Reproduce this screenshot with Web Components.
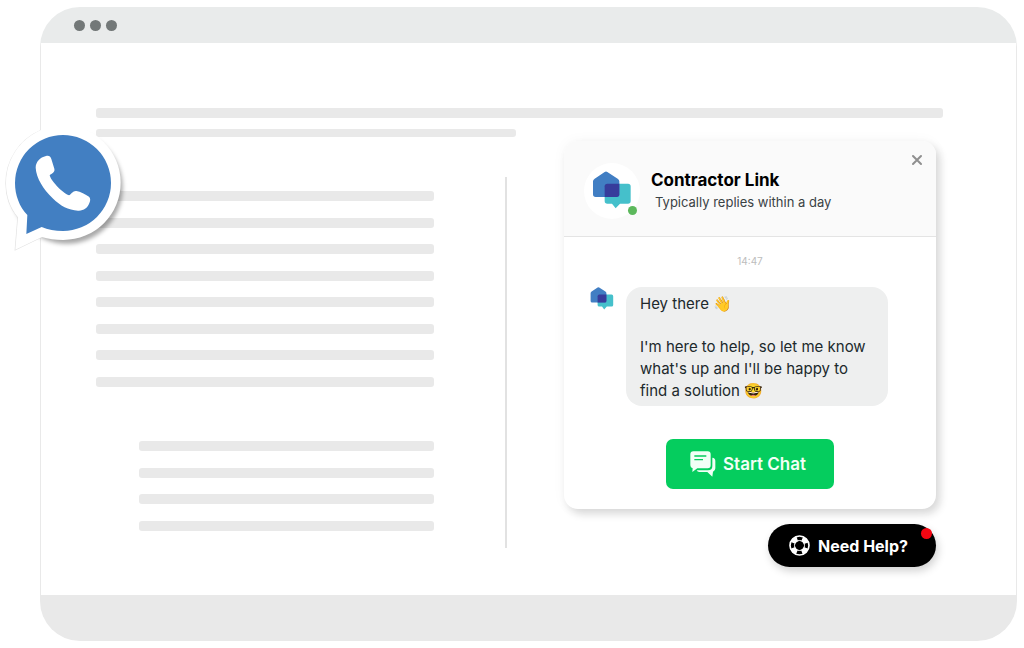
<!DOCTYPE html>
<html lang="en">
<head>
<meta charset="UTF-8">
<meta name="viewport" content="width=device-width, initial-scale=1.0">
<title>Contractor Link</title>
<style>
  body {
    margin: 0;
    padding: 7px 7px 7px 40px;
    background-color: #fff;
    font-family: Inter, "Liberation Sans", sans-serif;
  }
</style>
</head>
<body>
  <browser-frame>
    <phone-badge slot="badge"></phone-badge>
    <page-skeleton>
      <chat-card name="Contractor Link" status="Typically replies within a day" time="14:47">
        <chat-message>
          <p>Hey there 👋</p>
          <p>I'm here to help, so let me know what's up and I'll be happy to find a solution 🤓</p>
        </chat-message>
      </chat-card>
      <help-button>Need Help?</help-button>
    </page-skeleton>
  </browser-frame>

<script>
class BrowserFrame extends HTMLElement {
  constructor() {
    super();
    this.attachShadow({ mode: 'open' });
  }

  connectedCallback() {
    this.shadowRoot.innerHTML = `
      <style>
        :host {
          display: block;
          position: relative;
        }

        .window {
          border-radius: 40px;
          overflow: hidden;
          background-color: #fff;
        }

        header {
          display: flex;
          align-items: center;
          gap: 5px;
          height: 36px;
          padding: 0 34px;
          background-color: #e9ebeb;
        }

        .dot {
          width: 11px;
          height: 11px;
          border-radius: 50%;
          background-color: #737878;
        }

        main {
          border: solid #e9e9e9;
          border-width: 0 1px;
        }

        footer {
          height: 46px;
          background-color: #e9e9e9;
        }
      </style>

      <div class="window">
        <header>
          <span class="dot"></span>
          <span class="dot"></span>
          <span class="dot"></span>
        </header>
        <main><slot></slot></main>
        <footer></footer>
      </div>
      <slot name="badge"></slot>
    `;
  }
}

class PhoneBadge extends HTMLElement {
  constructor() {
    super();
    this.attachShadow({ mode: 'open' });
  }

  connectedCallback() {
    this.shadowRoot.innerHTML = `
      <style>
        :host {
          display: block;
          position: absolute;
          top: 120px;
          left: -40px;
        }

        svg {
          display: block;
          width: 133px;
          height: 133px;
          overflow: visible;
        }

        .shadow {
          filter: blur(7px);
        }
      </style>

      <svg viewBox="0 381 399 399" role="img" aria-label="Phone">
        <circle class="shadow" cx="200" cy="563" r="168" fill="#000" fill-opacity="0.34"/>
        <path fill="none" stroke="#e2e2e2" stroke-width="4" d="M122 392 A172 172 0 0 0 18 550 C18 588 30 624 54 652 L46 749 L125 711"/>
        <path fill="#fff" d="M54 652 C30 624 18 588 18 550 A172 172 0 1 1 190 720 C166 720 145 717 125 711 L46 749 Z"/>
        <path fill="#427fc2" d="M82 645 C58 620 45 585 45 549 A144 144 0 1 1 189 693 C165 693 143 689 125 681 L79 702 Z"/>
        <path fill="#fff" d="M107 503 C107 486 120 472 138 468 C147 466 151 469 154 477 L163 506 C165 514 161 518 149 525 C151 541 187 578 207 586 C214 583 218 572 229 573 C241 575 257 583 267 590 C272 594 271 602 269 607 C263 625 250 633 234 632 C205 631 181 618 158 595 C130 567 109 535 107 503 Z"/>
      </svg>
    `;
  }
}

class PageSkeleton extends HTMLElement {
  constructor() {
    super();
    this.attachShadow({ mode: 'open' });
  }

  bars(count) {
    return '<span class="bar"></span>'.repeat(count);
  }

  connectedCallback() {
    this.shadowRoot.innerHTML = `
      <style>
        :host {
          display: block;
          padding: 65px 73px 28px 55px;
        }

        .bar {
          display: block;
          height: 10px;
          border-radius: 3px;
          background-color: #e9e9e9;
        }

        .subtitle {
          width: 420px;
          height: 8px;
          margin-top: 11px;
        }

        .columns {
          display: grid;
          grid-template-columns: 1fr 2px 372px;
          gap: 57px;
          margin-top: 4px;
          padding-right: 7px;
        }

        .text {
          padding: 50px 14px 0 0;
        }

        .group {
          display: flex;
          flex-direction: column;
          justify-content: space-between;
          height: 196px;
        }

        .group.indented {
          height: 90px;
          margin-top: 54px;
          padding-left: 43px;
        }

        .divider {
          margin: 36px 0 19px;
          background-color: #e2e2e2;
        }

        .chat {
          display: flex;
          flex-direction: column;
          align-items: flex-end;
          gap: 15px;
        }
      </style>

      <div class="bar"></div>
      <div class="bar subtitle"></div>
      <div class="columns">
        <div class="text">
          <div class="group">${this.bars(8)}</div>
          <div class="group indented">${this.bars(4)}</div>
        </div>
        <div class="divider"></div>
        <div class="chat"><slot></slot></div>
      </div>
    `;
  }
}

class BrandLogo extends HTMLElement {
  constructor() {
    super();
    this.attachShadow({ mode: 'open' });
  }

  connectedCallback() {
    this.shadowRoot.innerHTML = `
      <style>
        :host {
          display: block;
        }

        svg {
          display: block;
          width: var(--logo-size, 40px);
          height: var(--logo-size, 40px);
        }
      </style>

      <svg viewBox="0 0 120 120" aria-hidden="true">
        <path fill="#45c0cb" d="M42 38 H108 Q116 38 116 46 V90 Q116 98 108 98 H84 L71 112 L60 98 H46 Q38 98 38 90 V42 Z"/>
        <path fill="#417ec3" d="M3 31 Q3 26 8 23 L38 3 Q42 0 46 3 L77 23 Q82 26 82 31 V70 Q82 78 74 78 H11 Q3 78 3 70 Z"/>
        <path fill="#373c9b" d="M38 46 Q38 38 46 38 H82 V70 Q82 78 74 78 H38 Z"/>
      </svg>
    `;
  }
}

class ChatCard extends HTMLElement {
  constructor() {
    super();
    this.attachShadow({ mode: 'open' });
  }

  connectedCallback() {
    this.shadowRoot.innerHTML = `
      <style>
        :host {
          display: block;
          align-self: stretch;
          border-radius: 14px;
          background-color: #fff;
          box-shadow: 4px 5px 8px rgba(0, 0, 0, 0.14), 0 0 14px rgba(0, 0, 0, 0.04);
        }

        header {
          display: flex;
          align-items: flex-start;
          height: 95px;
          border-bottom: 1px solid #e4e4e4;
          border-radius: 14px 14px 0 0;
          background-color: #fafafa;
        }

        .avatar {
          position: relative;
          margin: 22px 11px 0 20px;
          padding: 8px;
          border-radius: 50%;
          background-color: #fff;
        }

        .online {
          position: absolute;
          right: 3px;
          bottom: 4px;
          width: 9px;
          height: 9px;
          border-radius: 50%;
          background-color: #5cb85c;
        }

        .who {
          flex: 1;
          padding-top: 28px;
        }

        h2 {
          margin: 0;
          font-size: 17px;
          line-height: 22px;
          font-weight: 700;
          color: #000;
        }

        .who p {
          margin: 0;
          padding-left: 4px;
          font-size: 13px;
          line-height: 22px;
          color: #3a4245;
        }

        .close {
          margin: 12px 12px 0 0;
          padding: 0;
          border: 0;
          background: none;
          cursor: pointer;
        }

        .close svg {
          display: block;
          width: 14px;
          height: 14px;
        }

        time {
          display: block;
          padding-top: 16px;
          text-align: center;
          font-size: 10px;
          line-height: 16px;
          color: #bdbdbd;
        }

        .row {
          display: flex;
          align-items: flex-start;
          gap: 12px;
          padding: 18px 48px 0 26px;
        }

        .row brand-logo {
          --logo-size: 24px;
        }

        .start {
          display: flex;
          align-items: center;
          gap: 7px;
          height: 50px;
          margin: 33px auto 0;
          padding: 0 28px 0 24px;
          border: 0;
          border-radius: 7px;
          background-color: #05cd5e;
          color: #f2fff6;
          font-family: inherit;
          font-size: 17px;
          font-weight: 600;
          cursor: pointer;
        }

        .start svg {
          width: 26px;
          height: 26px;
        }

        .body {
          padding-bottom: 20px;
        }
      </style>

      <header>
        <div class="avatar">
          <brand-logo></brand-logo>
          <span class="online"></span>
        </div>
        <div class="who">
          <h2>${this.getAttribute('name')}</h2>
          <p>${this.getAttribute('status')}</p>
        </div>
        <button class="close" type="button" aria-label="Close">
          <svg viewBox="0 0 14 14"><path d="M3 3 L11 11 M11 3 L3 11" stroke="#8f8f8f" stroke-width="2" stroke-linecap="round"/></svg>
        </button>
      </header>
      <div class="body">
        <time>${this.getAttribute('time')}</time>
        <div class="row">
          <brand-logo></brand-logo>
          <slot></slot>
        </div>
        <button class="start" type="button">
          <svg viewBox="0 0 78 78" aria-hidden="true">
            <path fill="#f2fff6" d="M67 20 Q76 21 76 30 V52 Q76 60 69 62 L67 77 L52 63 H28 Q22 63 20 58 H54 Q67 58 67 45 Z"/>
            <path fill="#f2fff6" d="M10 1 H53 Q62 1 62 10 V43 Q62 52 53 52 H22 L7 63 L8 52 Q1 50 1 43 V10 Q1 1 10 1 Z"/>
            <path d="M13 15 H49 M13 26 H39" stroke="#05cd5e" stroke-width="4"/>
          </svg>
          Start Chat
        </button>
      </div>
    `;
  }
}

class ChatMessage extends HTMLElement {
  constructor() {
    super();
    this.attachShadow({ mode: 'open' });
  }

  connectedCallback() {
    this.shadowRoot.innerHTML = `
      <style>
        :host {
          display: flex;
          flex: 1;
          flex-direction: column;
          gap: 21px;
          padding: 6px 14px 4px;
          border-radius: 16px;
          background-color: #eeefef;
          color: #20292c;
          font-size: 15px;
          line-height: 22px;
        }

        ::slotted(p) {
          margin: 0;
        }
      </style>

      <slot></slot>
    `;
  }
}

class HelpButton extends HTMLElement {
  constructor() {
    super();
    this.attachShadow({ mode: 'open' });
  }

  connectedCallback() {
    this.shadowRoot.innerHTML = `
      <style>
        :host {
          display: block;
          position: relative;
        }

        button {
          display: flex;
          align-items: center;
          gap: 8px;
          height: 43px;
          padding: 0 28px 0 21px;
          border: 0;
          border-radius: 22px;
          background-color: #000;
          box-shadow: 2px 4px 8px rgba(0, 0, 0, 0.18);
          color: #fff;
          font-family: inherit;
          font-size: 16px;
          font-weight: 700;
          cursor: pointer;
        }

        svg {
          width: 21px;
          height: 21px;
        }

        .alert {
          position: absolute;
          top: 4px;
          right: 4px;
          width: 11px;
          height: 11px;
          border-radius: 50%;
          background-color: #f40612;
        }
      </style>

      <button type="button">
        <svg viewBox="0 0 63 63" fill="none" aria-hidden="true">
          <circle cx="31.5" cy="31.5" r="28.5" stroke="#fff" stroke-width="5"/>
          <circle cx="31.5" cy="31.5" r="15" stroke="#fff" stroke-width="3"/>
          <circle cx="31.5" cy="31.5" r="21" stroke="#fff" stroke-width="15" stroke-dasharray="18 14.99" stroke-dashoffset="-7.5"/>
        </svg>
        <slot></slot>
      </button>
      <span class="alert"></span>
    `;
  }
}

customElements.define('browser-frame', BrowserFrame);
customElements.define('phone-badge', PhoneBadge);
customElements.define('page-skeleton', PageSkeleton);
customElements.define('brand-logo', BrandLogo);
customElements.define('chat-card', ChatCard);
customElements.define('chat-message', ChatMessage);
customElements.define('help-button', HelpButton);
</script>
</body>
</html>
